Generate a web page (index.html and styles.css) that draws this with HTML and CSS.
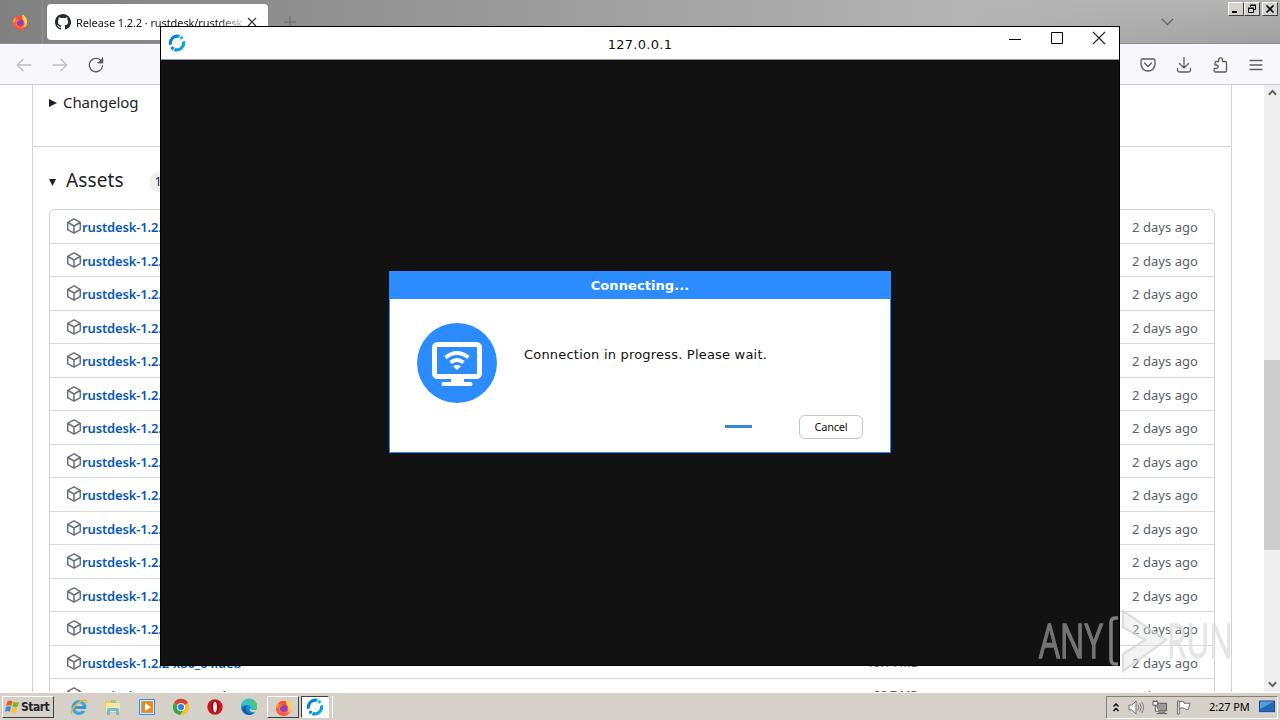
FILE: index.html
```html
<!DOCTYPE html>
<html lang="en">
<head>
<meta charset="utf-8">
<title>Release 1.2.2 · rustdesk/rustdesk</title>
<link rel="stylesheet" href="styles.css">
</head>
<body>
<svg class="defs" width="0" height="0">
  <symbol id="box" viewBox="0 0 16 16"><path d="M8 .9 14.300 4.300v7.400L8 15.100 1.700 11.700V4.300zM1.900 4.500 8 8l6.100-3.500M8 8v7" fill="none" stroke="#687078" stroke-width="1.500" stroke-linejoin="round"/></symbol>
  <symbol id="firefox" viewBox="0 0 16 16"><circle cx="8" cy="8.700" r="7" fill="#ff4a3d"/><path d="M8 15.700A7 7 0 0 1 1 8.500C1 6 2 4 3.200 3l.6 2 2-.8C4 6 4 12 8 13c5 0 6-5 3-8L10.500.5C14 2.500 15.400 6 15 9c-.5 4-3 6.700-7 6.700z" fill="#ff9c22"/><path d="M10.500.5C14 2.500 15.400 6 15 9c-.4 2-1.500 3.500-3 4.500 1.500-3 1-6-1.500-8.500z" fill="#ffd83e"/><circle cx="8" cy="8.600" r="3.300" fill="#8a3fd0"/><path d="M3 6c2-2 4-1 5 .4-2 .2-2 1.300-3.500 1.600z" fill="#ff6b2c"/><path d="M1 9c0 5 4 7 7 7 3.500 0 6-2 6.800-5-2 3-6 3-8.800 1.500C4 11.500 3.500 9 4 7z" fill="#f72d61" opacity=".6"/></symbol>
  <symbol id="rust" viewBox="0 0 20 20"><path d="M12 2.600A7.500 7.500 0 0 0 3 12" fill="none" stroke="#087fe0" stroke-width="3.500"/><path d="M4 14.500Q6 17.400 9 17.500" fill="none" stroke="#1683df" stroke-width="3.500"/><path d="M8 17.400A7.500 7.500 0 0 0 17 8" fill="none" stroke="#0aa4da" stroke-width="3.500"/><path d="M16 5.500Q14 2.600 11 2.500" fill="none" stroke="#19b9cf" stroke-width="3.500"/><path d="m12.500 4.800 2-4M7.500 15.200l-2 4M.5 13.500l4-1.500M19.500 6.500l-4 1.500" stroke="#fff" stroke-width="1.100"/></symbol>
</svg>
<div class="desktop">
  <main class="browser">
    <header class="tabs">
      <div class="tab-lead"><svg class="fx"><use href="#firefox"/></svg></div>
      <div class="tab">
        <svg class="gh" viewBox="0 0 16 16"><path fill="#24292f" d="M8 0C3.580 0 0 3.580 0 8c0 3.540 2.290 6.530 5.470 7.590.4.070.55-.17.55-.38v-1.490c-2.010.37-2.530-.49-2.690-.94-.09-.23-.48-.94-.82-1.130-.28-.15-.68-.52-.01-.53.63-.01 1.080.58 1.230.82.72 1.210 1.870.87 2.330.66.070-.52.280-.87.510-1.070-1.780-.2-3.640-.89-3.640-3.950 0-.87.31-1.590.82-2.150-.08-.2-.36-1.020.08-2.120 0 0 .67-.21 2.200.82a7.600 7.600 0 0 1 4 0c1.530-1.040 2.200-.82 2.200-.82.44 1.100.16 1.920.08 2.120.51.56.82 1.270.82 2.150 0 3.070-1.870 3.750-3.650 3.950.29.25.54.73.54 1.480v2.200c0 .21.15.46.55.38A8 8 0 0 0 8 0z"/></svg>
        <span class="tab-title">Release 1.2.2 · rustdesk/rustdesk</span>
        <svg class="tab-x" viewBox="0 0 10 10"><path d="m1 1 8 8M9 1 1 9"/></svg>
      </div>
      <svg class="plus" viewBox="0 0 12 12"><path d="M6 0v12M0 6h12"/></svg>
      <svg class="alltabs" viewBox="0 0 13 8"><path d="m.8.800 5.700 5.700L12.200.8"/></svg>
      <div class="winbtns">
        <i><svg viewBox="0 0 14 12"><path d="M3 9h5" stroke-width="2"/></svg></i><i><svg viewBox="0 0 14 12"><path d="M5.500 4V2.500h5v4H9M5 2h6M3.500 5.500h5v4h-5zM3 5h6"/></svg></i><i class="gap"><svg viewBox="0 0 14 12"><path d="m3.500 2.500 7 7m0-7-7 7" stroke-width="1.700"/></svg></i>
      </div>
    </header>
    <nav class="toolbar">
      <svg class="nav dim" viewBox="0 0 16 16"><path d="M15 8H1.500M7 2.300 1.300 8 7 13.700"/></svg>
      <svg class="nav dim" viewBox="0 0 16 16"><path d="M1 8h13.500M9 2.300 14.700 8 9 13.700"/></svg>
      <svg class="nav" viewBox="0 0 16 16"><path d="M13.700 4.500A6.700 6.700 0 1 0 14.600 9M14.500 1v4.700H9.800"/><path d="M14.500 2v3.700h-3.700z" fill="#5b5b66"/></svg>
      <div class="tools">
        <svg class="nav" viewBox="0 0 16 16"><path d="M2.700 2h10.600Q15 2 15 3.700V7A7 7 0 0 1 1 7V3.700Q1 2 2.700 2zM4.500 6 8 9.500 11.500 6"/></svg>
        <svg class="nav" viewBox="0 0 16 16"><path d="M8 .5V11M3.500 6.500 8 11l4.500-4.500M1.500 11.500v1.700q0 1.800 1.800 1.800h9.400q1.800 0 1.800-1.800v-1.700"/></svg>
        <svg class="nav" viewBox="0 0 16 16"><path d="M3.500 15h9.700q1.300 0 1.300-1.300V5.800q0-1.300-1.300-1.300H10.500V2.800a1.900 1.900 0 0 0-3.800 0v1.700H4.500Q3 4.500 3 6v2h1.500a1.700 1.700 0 0 1 0 3.400H2.200v2.300Q2.200 15 3.500 15z"/></svg>
        <svg class="nav" viewBox="0 0 16 16"><path d="M2 3.500h12M2 8h12M2 12.500h12"/></svg>
      </div>
    </nav>
    <div class="viewport">
      <section class="release">
        <div class="changelog"><svg class="tri" viewBox="0 0 8 8"><path d="M0 0v8l8-4z"/></svg><span>Changelog</span></div>
        <div class="assets">
          <h2><svg class="tri down" viewBox="0 0 8 8"><path d="M0 0h8L4 8z"/></svg><span class="word">Assets</span><span class="count">19</span></h2>
          <ul class="files">
            <li><svg><use href="#box"/></svg><b>rustdesk-1.2.2</b><time>2 days ago</time></li>
            <li><svg><use href="#box"/></svg><b>rustdesk-1.2.2</b><time>2 days ago</time></li>
            <li><svg><use href="#box"/></svg><b>rustdesk-1.2.2</b><time>2 days ago</time></li>
            <li><svg><use href="#box"/></svg><b>rustdesk-1.2.2</b><time>2 days ago</time></li>
            <li><svg><use href="#box"/></svg><b>rustdesk-1.2.2</b><time>2 days ago</time></li>
            <li><svg><use href="#box"/></svg><b>rustdesk-1.2.2</b><time>2 days ago</time></li>
            <li><svg><use href="#box"/></svg><b>rustdesk-1.2.2</b><time>2 days ago</time></li>
            <li><svg><use href="#box"/></svg><b>rustdesk-1.2.2</b><time>2 days ago</time></li>
            <li><svg><use href="#box"/></svg><b>rustdesk-1.2.2</b><time>2 days ago</time></li>
            <li><svg><use href="#box"/></svg><b>rustdesk-1.2.2</b><time>2 days ago</time></li>
            <li><svg><use href="#box"/></svg><b>rustdesk-1.2.2</b><time>2 days ago</time></li>
            <li><svg><use href="#box"/></svg><b>rustdesk-1.2.2</b><time>2 days ago</time></li>
            <li><svg><use href="#box"/></svg><b>rustdesk-1.2.2</b><time>2 days ago</time></li>
            <li><svg><use href="#box"/></svg><b>rustdesk-1.2.2-x86_64.deb</b><span class="size">19.14 MB</span><time>2 days ago</time></li>
            <li class="last"><svg><use href="#box"/></svg><b>rustdesk-1.2.2-x86_64.d</b><span class="size">22.7 MB</span><time>2 days ago</time></li>
          </ul>
        </div>
      </section>
      <aside class="scroll">
        <svg viewBox="0 0 8 6"><path d="M.8 5 4 1.500 7.200 5"/></svg><i class="thumb"></i><svg viewBox="0 0 8 6"><path d="M.8 1 4 4.500 7.200 1"/></svg>
      </aside>
    </div>
  </main>

  <section class="remote">
    <header class="titlebar">
      <svg class="logo"><use href="#rust"/></svg>
      <span class="host">127.0.0.1</span>
      <div class="controls">
        <svg viewBox="0 0 14 14"><path d="M1 8.500h12" stroke="#000"/></svg>
        <svg viewBox="0 0 14 14"><path d="M1.500 1.500h11v11h-11z" stroke="#000"/></svg>
        <svg viewBox="0 0 14 14"><path d="m1 1 12 12M13 1 1 13" stroke-width="1.100"/></svg>
      </div>
    </header>
    <div class="screen">
      <div class="dialog">
        <div class="caption">Connecting...</div>
        <div class="message">
          <svg class="monitor" viewBox="0 0 80 80"><circle cx="40" cy="40" r="40" fill="#2c8cff"/><rect x="17.500" y="21.500" width="45" height="32" rx="3" fill="none" stroke="#fff" stroke-width="5"/><path d="M34 55h13v4h6.500a2 2 0 0 1 0 4h-27a2 2 0 0 1 0-4H34z" fill="#fff"/><path d="M28.500 34.500q11.500-9 23 0M33.500 39.500q6.500-5 13 0" fill="none" stroke="#fff" stroke-width="3.700"/><path d="m36 43.200q4-2.500 8 0l-4 3.800z" fill="#fff"/></svg>
          <p>Connection in progress. Please wait.</p>
        </div>
        <div class="actions"><i class="progress"></i><button>Cancel</button></div>
      </div>
    </div>
  </section>

  <svg class="watermark" viewBox="0 0 210 72">
    <text class="run" x="133" y="54" textLength="66" lengthAdjust="spacingAndGlyphs">RUN</text>
    <text class="any" x="5" y="54" textLength="64" lengthAdjust="spacingAndGlyphs">ANY</text>
    <path d="M84 14h-3q-4 0-4 5v36q0 5 4 5h3" stroke="#999" stroke-width="3.500" fill="none"/><path d="m89 7 43 29-43 31V50l22-14-22-13z" fill="#ddd" fill-opacity=".4" stroke="#d6d6d6" stroke-width="2.500"/>
  </svg>

  <footer class="taskbar">
    <div class="start"><svg viewBox="0 0 16 16"><path d="M2.500 2q3-2 5.500 0L6.700 7q-2.500-1.500-5.500 0z" fill="#ed5b25"/><path d="M9 2.500q3 1.500 6 0L13.500 7.500q-3 1.500-5.500 0z" fill="#75b62a"/><path d="M1 8q3-1.500 5.500 0L5 13q-3-1.500-5 0z" fill="#3e89d9"/><path d="M7.500 8.500q3 1.500 5.700 0L12 13.500q-3 1.500-6 0z" fill="#ffc52e"/></svg><b>Start</b></div>
    <div class="launch">
      <svg viewBox="0 0 18 18"><circle cx="9" cy="9.500" r="5.800" fill="none" stroke="#3aa2dd" stroke-width="3.300"/><path d="M5 9.500h9.500" stroke="#2789cb" stroke-width="2.500"/><path d="M12 12h5v-1" stroke="#d5d0c8" stroke-width="2" fill="none"/><path d="M2 16C-1 13 8 3 15 2q2 0 1 3" fill="none" stroke="#eeb72d" stroke-width="1.500"/></svg>
      <svg viewBox="0 0 18 18"><path d="M1 3h6l1 2h8v10H1z" fill="#e9c866"/><path d="M2 5h14v9H2z" fill="#f7e7a7"/><path d="M7 2h5v3H7z" fill="#9fce7b"/><path d="M3 17v-5q0-2 2-2h8q2 0 2 2v5h-3v-4H6v4z" fill="#73b9dc"/></svg>
      <svg viewBox="0 0 18 18"><path d="M1.500 1.500h15v15h-15z" fill="#d8ecf9" stroke="#438dc4"/><path d="M3 3h12v12H3z" fill="#79b6df"/><rect x="4" y="3.500" width="11" height="11" rx="2" fill="#f48617"/><path d="M7 5v8l6-4z" fill="#fff"/></svg>
      <svg viewBox="0 0 18 18"><circle cx="9" cy="9" r="8" fill="#f4c31f"/><path d="M9 9 2 5a8 8 0 0 1 14 0z" fill="#dc4035"/><path d="m9 9-7-4a8 8 0 0 0 6 12l4-6z" fill="#36a853"/><circle cx="9" cy="9" r="4" fill="#fff"/><circle cx="9" cy="9" r="3.100" fill="#377fe8"/></svg>
      <svg viewBox="0 0 18 18"><circle cx="9" cy="9" r="7.700" fill="#c61a23"/><ellipse cx="9" cy="9" rx="3.600" ry="6.500" fill="#8b0712"/><ellipse cx="9" cy="9" rx="2" ry="5.500" fill="#f5e9e9"/></svg>
      <svg viewBox="0 0 18 18"><circle cx="9" cy="9" r="8" fill="#1683cf"/><path d="M1 9A8 8 0 0 1 17 8c0 4-5 4.500-7 3 2-2 0-4-3-4-3 0-5 1-6 2z" fill="#35c1ce"/><path d="M8 2q8-1 9 6 0 4-5 4l2-5z" fill="#51c763"/><path d="M6 8c-2 5 3 9 8 7-3 3-9 2-11-2-1-3 1-5 3-5z" fill="#1357a5"/><path d="M10 10.500c1 2 5 2 7 .5l-1.500 3c-4 1-7-1-5.500-3.500z" fill="#d5d0c8"/></svg>
    </div>
    <div class="task"><svg><use href="#firefox"/></svg></div>
    <div class="task active"><svg><use href="#rust"/></svg></div>
    <i class="grip"></i>
    <div class="tray">
      <svg class="up" viewBox="0 0 8 11"><path d="M1.500 4.500 4 2l2.500 2.500M1.500 9 4 6.500 6.500 9"/></svg>
      <svg viewBox="0 0 17 16"><path d="M1 5.500h3L8.500 1v14L4 10.500H1z" fill="#fff" stroke="#666"/><path d="M10.500 5q2 3 0 6M12.500 3.500q3 4.500 0 9M14.500 2q4 6 0 12" fill="none" stroke="#777"/></svg>
      <svg viewBox="0 0 17 16"><path d="M5.500 3.500h10v8h-10z" fill="#999" stroke="#555"/><path d="M7 13h7M5 14.500h11" stroke="#555"/><path d="M1 1.500h5v4H1zM3.500 5.500V12H7M2 0v2M5 0v2" fill="#fff" stroke="#555"/></svg>
      <svg viewBox="0 0 17 16"><path d="M1.500 1h2v14h-2z" fill="#fff" stroke="#666"/><path d="M3.500 2q3-1.500 5 0v1.500h6.500L13 10q-2 1-4-1-2-1.500-5.500 0z" fill="#fff" stroke="#666"/></svg>
      <span class="clock">2:27 PM</span>
      <svg class="peek" viewBox="0 0 16 14"><path d="M.5 1h15v11H.5z" fill="#2767b8" stroke="#164985"/><path d="M1 1.500h14L1 9z" fill="#549be0"/><path d="M0 12h16v1H0z" fill="#a8c6e0"/></svg>
    </div>
  </footer>
</div>
</body>
</html>
```
FILE: styles.css
```css
* { box-sizing: border-box; }
body { margin: 0; overflow: hidden; font-family: "Noto Sans", sans-serif; color: #1f2328; }
svg { display: block; flex: none; }
.defs { position: absolute; }
.desktop { position: relative; width: 1280px; height: 720px; overflow: hidden; display: flex; flex-direction: column; }
.browser { height: 692px; display: flex; flex-direction: column; overflow: hidden; background: #fff; }

.tabs { height: 44px; flex: none; display: flex; align-items: flex-start; background: linear-gradient(90deg, #808080, #909090 25%, #b4b4b4 75%, transparent), linear-gradient(#b4b4b4, #9f9f9f); border-bottom: 1px solid #8e8e8e; }
.tab-lead { width: 43px; height: 43px; border-right: 1px solid #929292; padding: 14px 0 0 12px; }
.fx { width: 16px; height: 16px; }
.tab { width: 221px; height: 36px; margin: 4px 0 0 4px; padding-left: 8px; display: flex; align-items: center; background: #fff; border-radius: 4px; }
.gh { width: 16px; height: 16px; }
.tab-title { width: 166px; margin-left: 5px; padding-top: 2px; overflow: hidden; white-space: nowrap; font-size: 11px; letter-spacing: -.1px; line-height: 18px; color: #15141a; -webkit-mask: linear-gradient(90deg, #000 85%, transparent 105%); mask: linear-gradient(90deg, #000 85%, transparent 105%); }
.tab-x { width: 10px; height: 10px; margin-left: 5px; fill: none; stroke: #333; stroke-width: 1.200; }
.plus { width: 12px; height: 12px; margin: 16px 0 0 16px; fill: none; stroke: #666; }
.alltabs { width: 13px; height: 8px; margin: 18px 0 0 865px; fill: none; stroke: #666; stroke-width: 1.300; }
.winbtns { display: flex; margin: 2px 0 0 54px; }
.winbtns i { width: 16px; height: 14px; background: #d6d1ca; border: 1px solid; border-color: #fff #404040 #404040 #fff; }
.winbtns .gap { margin-left: 2px; }
.winbtns svg { width: 14px; height: 12px; fill: none; stroke: #000; }

.toolbar { height: 41px; flex: none; display: flex; align-items: center; gap: 20px; padding: 1px 16px 0; background: #f8f8fc; border-bottom: 1px solid #ccc; }
.nav { width: 16px; height: 16px; fill: none; stroke: #5b5b66; stroke-width: 1.300; stroke-linecap: round; stroke-linejoin: round; }
.dim { stroke: #bdbdc3; }
.tools { display: flex; gap: 20px; margin-left: auto; }

.viewport { height: 607px; display: flex; justify-content: space-between; background: #fff; }
.release { width: 1200px; height: 607px; margin-left: 32px; overflow: hidden; border: solid #d0d3d6; border-width: 0 1px; }
.changelog { height: 62px; padding: 5px 0 0 16px; display: flex; align-items: flex-start; gap: 6px; font-size: 15px; line-height: 24px; letter-spacing: -.1px; border-bottom: 1px solid #d0d3d6; }
.tri { width: 8px; height: 8px; margin-top: 9px; fill: #1f2328; }
.assets { padding: 0 16px; }
.assets h2 { height: 62px; margin: 0; padding-top: 19px; display: flex; align-items: flex-start; font-size: 19px; font-weight: 400; line-height: 28px; }
.down { width: 7px; height: 7px; margin-top: 13px; }
.word { width: 83px; margin-left: 10px; letter-spacing: .1px; }
.count { width: 24px; height: 20px; margin-top: 6px; padding-left: 1px; border-radius: 10px; background: #eff0f2; text-align: center; font-size: 12px; line-height: 20px; }
.files { list-style: none; margin: 0; padding: 0; border: 1px solid #d0d3d6; border-radius: 6px; }
.files li { height: 33.500px; padding: 0 16px; display: flex; align-items: center; font-size: 13px; border-bottom: 1px solid #d5d8db; }
.files svg { width: 16px; height: 16px; }
.files b { width: 784px; color: #0758b8; font-weight: 600; letter-spacing: -.15px; padding-top: 2px; }
.files time { width: 66px; margin-left: auto; color: #59616a; letter-spacing: .05px; padding-top: 2px; white-space: nowrap; }
.size { width: 52px; color: #59616a; font-size: 12px; letter-spacing: -.2px; padding-top: 2px; text-align: right; white-space: nowrap; }
.files .last { padding-bottom: 1px; }
.scroll { width: 16px; background: #efefef; display: flex; flex-direction: column; align-items: center; padding: 4px 0 4px; }
.scroll svg { width: 9px; height: 7px; fill: none; stroke: #606060; stroke-width: 1.700; }
.thumb { width: 16px; height: 190px; margin: 264px 0 131px; background: #cdcdcd; }

.remote { position: absolute; left: 160px; top: 26px; width: 960px; height: 640px; border: 1px solid #000; background: #121212; }
.titlebar { height: 33px; display: grid; grid-template-columns: 1fr auto 1fr; align-items: center; background: #fff; border-bottom: 1px solid #999; }
.logo { width: 18px; height: 18px; margin-left: 7px; }
.host { font: 13px "DejaVu Sans", sans-serif; padding-top: 2px; letter-spacing: .3px; color: #111; }
.controls { display: flex; justify-content: flex-end; gap: 28px; padding: 0 13px 10px 0; }
.controls svg { width: 14px; height: 14px; fill: none; stroke: #222; }
.screen { height: 605px; padding-top: 211px; display: flex; justify-content: center; align-items: flex-start; }
.dialog { width: 502px; height: 182px; border: 1px solid #2c8cff; background: #fff; font-family: "DejaVu Sans", sans-serif; }
.caption { height: 27px; background: #2c8cff; color: #fff; text-align: center; font-size: 13px; font-weight: 700; line-height: 27px; letter-spacing: .08px; }
.message { height: 115px; padding: 24px 27px 0; display: flex; gap: 27px; }
.monitor { width: 80px; height: 80px; }
.message p { margin: 23px 0 0; font-size: 13px; line-height: 18px; letter-spacing: .2px; color: #111; }
.actions { display: flex; justify-content: flex-end; align-items: center; gap: 47px; height: 26px; padding-right: 27px; }
.progress { width: 27px; height: 3px; margin-bottom: 1px; background: #3589db; }
.actions button { width: 64px; height: 24px; padding: 0 0 1px; border: 1px solid #c5c5c5; border-radius: 6px; background: #fff; color: #111; font: 11px "Noto Sans", sans-serif; letter-spacing: -.2px; }

.watermark { position: absolute; left: 1034px; top: 604px; width: 210px; height: 72px; opacity: .8; }
.watermark text { font: 47px "Open Sans", sans-serif; stroke-width: 1.300; }
.any { fill: #8d8d8d; stroke: #8d8d8d; }
.run { fill: #dfdfdf; stroke: #dfdfdf; }

.taskbar { height: 28px; flex: none; display: flex; align-items: center; padding: 1px 2px 0; background: #d5d0c8; border-top: 1px solid #fff; }
.start { width: 52px; height: 22px; display: flex; align-items: center; gap: 1px; padding-left: 2px; border: 1px solid; border-color: #fff #404040 #404040 #fff; font: 12px "DejaVu Sans Condensed", "DejaVu Sans", sans-serif; letter-spacing: -.5px; }
.start svg { width: 15px; height: 16px; }
.launch { display: flex; gap: 16px; margin-left: 16px; }
.launch svg { width: 18px; height: 18px; }
.task { width: 32px; height: 22px; margin-left: 9px; display: flex; align-items: center; justify-content: center; border: 1px solid; border-color: #fff #404040 #404040 #fff; }
.task svg { width: 17px; height: 17px; }
.active { width: 28px; margin-left: 2px; background: #fff; border-color: #404040 #fff #fff #404040; }
.active svg { width: 18px; height: 18px; }
.grip { width: 3px; height: 22px; margin-left: 1px; border: solid #fff; border-width: 0 1px 0 0; }
.tray { width: 172px; height: 23px; margin-left: auto; display: flex; align-items: center; gap: 8px; padding: 0 1px 0 5px; border: 1px solid; border-color: #858078 #fff #fff #858078; }
.tray svg { width: 16px; height: 15px; }
.tray .up { width: 8px; height: 11px; fill: none; stroke: #000; stroke-width: 1.400; }
.clock { width: 44px; margin: -1px 0 0 9px; font: 11px "Noto Sans", sans-serif; color: #000; white-space: nowrap; letter-spacing: -.1px; }
.tray .peek { width: 16px; height: 14px; margin-left: -2px; }
```
